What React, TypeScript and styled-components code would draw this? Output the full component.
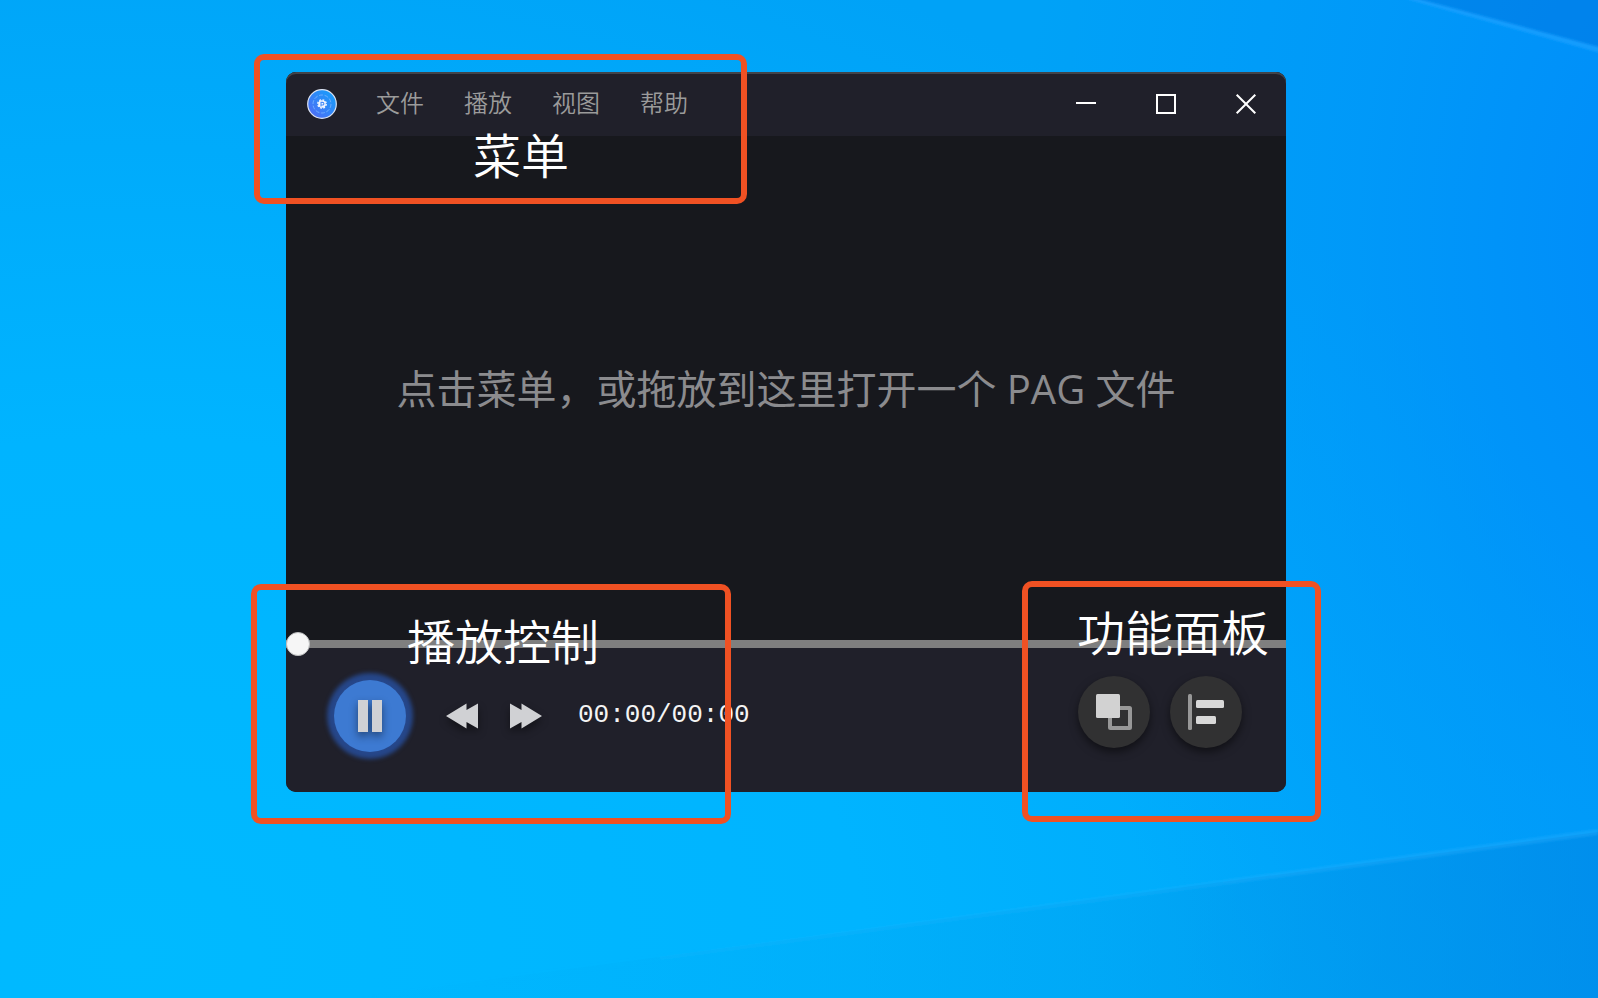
import React, { useState } from "react";
import styled, { createGlobalStyle } from "styled-components";

const GlobalStyle = createGlobalStyle`
  *, *::before, *::after { box-sizing: border-box; }
  body { margin: 0; font-family: "Open Sans", "Noto Sans CJK SC", sans-serif; }
  button { border: 0; padding: 0; margin: 0; background: none; font: inherit; cursor: pointer; }
`;

const Desktop = styled.div`
  position: relative;
  display: flex;
  align-items: flex-start;
  min-height: 100vh;
  padding: 72px 312px 72px 286px;
  overflow: hidden;
  background:
    radial-gradient(ellipse 42% 110% at 106% 24%, rgba(0, 136, 250, 0.9), rgba(0, 144, 250, 0.5) 50%, rgba(0, 156, 248, 0) 100%),
    radial-gradient(ellipse 115% 130% at 8% 96%, #00baff 0%, #00b4ff 40%, #00a2f7 85%);
`;

const Wallpaper = styled.svg`
  position: absolute;
  inset: 0;
  width: 100%;
  height: 100%;
`;

const PlayerWindow = styled.main`
  position: relative;
  flex: 1;
  display: flex;
  flex-direction: column;
  min-width: 880px;
  border-radius: 10px;
  background: #17181d;
`;

const TitleBar = styled.header`
  display: flex;
  align-items: center;
  height: 64px;
  padding-left: 20px;
  border-radius: 10px 10px 0 0;
  background: #20202a;
  box-shadow: inset 0 2px 0 #42444a;
`;

const Logo = styled.svg`
  width: 32px;
  height: 32px;
`;

const Menu = styled.nav`
  display: flex;
  gap: 40px;
  margin-left: 38px;
`;

const MenuButton = styled.button`
  padding-bottom: 2px;
  color: #9b9b9b;
  font-size: 24px;
  font-weight: 350;
  line-height: 36px;
`;

const WindowActions = styled.div`
  display: flex;
  margin-left: auto;
`;

const WindowButton = styled.button`
  display: grid;
  place-items: center;
  width: 80px;
  height: 64px;
`;

const Stage = styled.section`
  display: grid;
  place-items: center;
  height: 504px;
  padding-top: 2px;
`;

const Hint = styled.p`
  margin: 0;
  color: #8b8b8e;
  font-size: 40px;
  font-weight: 400;
  line-height: 60px;
  white-space: nowrap;
`;

const Seek = styled.input`
  appearance: none;
  position: relative;
  display: block;
  width: 100%;
  height: 8px;
  margin: 0;
  background: #7f7f7f;

  &::-webkit-slider-runnable-track { height: 8px; }
  &::-webkit-slider-thumb {
    appearance: none;
    width: 24px;
    height: 24px;
    margin-top: -8px;
    border: 1px solid #bdbebf;
    border-radius: 50%;
    background: #f6f6f6;
  }
`;

const ControlBar = styled.footer`
  display: flex;
  align-items: flex-start;
  height: 144px;
  padding: 28px 44px 0 48px;
  border-radius: 0 0 10px 10px;
  background: #20202a;
`;

const Transport = styled.div`
  display: flex;
  align-items: center;
  gap: 28px;
  padding-top: 4px;
`;

const RoundButton = styled.button<{ $primary?: boolean }>`
  display: grid;
  place-items: center;
  width: 72px;
  height: 72px;
  border-radius: 50%;
  background: ${(p) => (p.$primary ? "#3d7ad2" : "#313132")};
  box-shadow: ${(p) => (p.$primary ? "0 0 4px 7px #26478a" : "0 4px 8px rgba(0, 0, 0, 0.5)")};
`;

const SkipButton = styled.button`
  display: grid;
  place-items: center;
  width: 36px;
  height: 40px;
`;

const SkipGroup = styled.div`
  display: flex;
  gap: 28px;
  margin-left: 10px;
`;

const Glyph = styled.svg<{ $shadow?: boolean }>`
  display: block;
  overflow: visible;
  filter: ${(p) => (p.$shadow ? "drop-shadow(0 4px 4px rgba(0, 0, 0, 0.45))" : "none")};
`;

const Time = styled.output`
  margin-left: 6px;
  padding-bottom: 2px;
  color: #f4f4f4;
  font-family: "Liberation Mono", monospace;
  font-size: 26px;
  line-height: 32px;
`;

const Panels = styled.div`
  display: flex;
  gap: 20px;
  margin-left: auto;
`;

const Callout = styled.aside`
  position: absolute;
  border: 6px solid #f05123;
  border-radius: 10px;
  color: #fff;
  font-size: 48px;
  font-weight: 350;
  line-height: 72px;
  white-space: nowrap;
  pointer-events: none;
`;

const MenuCallout = styled(Callout)`
  top: -18px;
  left: -32px;
  width: 493px;
  height: 150px;
  padding: 60px 0 0 213px;
`;

const PlaybackCallout = styled(Callout)`
  bottom: -32px;
  left: -35px;
  width: 480px;
  height: 240px;
  padding: 16px 0 0 150px;
`;

const PanelCallout = styled(Callout)`
  right: -35px;
  bottom: -30px;
  width: 299px;
  height: 241px;
  padding: 10px 0 0 49px;
`;

const menus = ["文件", "播放", "视图", "帮助"];

function Beams() {
  return (
    <Wallpaper viewBox="0 0 1598 998" preserveAspectRatio="none" aria-hidden="true">
      <defs>
        <linearGradient id="floor" x1="0" x2="1">
          <stop offset="0" stopColor="#00a0e8" stopOpacity="0" />
          <stop offset="0.6" stopColor="#0094e4" stopOpacity="0.24" />
          <stop offset="1" stopColor="#0088e6" stopOpacity="0.65" />
        </linearGradient>
        <linearGradient id="beam" x1="0" x2="1">
          <stop offset="0" stopColor="#2cbcff" stopOpacity="0" />
          <stop offset="1" stopColor="#2cb0ff" stopOpacity="0.35" />
        </linearGradient>
        <filter id="soften" x="-5%" y="-5%" width="110%" height="110%">
          <feGaussianBlur stdDeviation="1.2" />
        </filter>
      </defs>
      <path d="M350 998 L1598 832 V998 Z" fill="url(#floor)" />
      <path d="M350 998 L1598 829 V835 L380 998 Z" fill="url(#beam)" filter="url(#soften)" />
      <path d="M1418 0 H1598 V48 Z" fill="#0070dc" fillOpacity="0.45" />
      <path d="M1402 -2 H1416 L1600 47 V53 Z" fill="#18a0ff" fillOpacity="0.75" filter="url(#soften)" />
    </Wallpaper>
  );
}

function AppLogo() {
  return (
    <Logo viewBox="0 0 32 32" aria-label="PAG" role="img">
      <defs>
        <linearGradient id="disc" x1="0" y1="1" x2="1" y2="0">
          <stop offset="0" stopColor="#5567f4" />
          <stop offset="1" stopColor="#0fa4fb" />
        </linearGradient>
      </defs>
      <circle cx="16" cy="16" r="14.3" fill="url(#disc)" stroke="#dce4f4" strokeWidth="1.2" />
      <circle cx="16" cy="16" r="9" fill="none" stroke="#7db8ff" strokeWidth="0.8" strokeDasharray="4 1.6" />
      <circle cx="16" cy="16" r="3.8" fill="#f4f8ff" />
      <circle cx="16" cy="16" r="4.2" fill="none" stroke="#f4f8ff" strokeWidth="1.4" strokeDasharray="1.8 1.5" />
      <path d="M15 18.4 V14.4 H16.6 A1.3 1.3 0 0 1 16.6 17 H15" fill="none" stroke="#468cf8" strokeWidth="1.1" />
    </Logo>
  );
}

export default function App() {
  const [position, setPosition] = useState(0);
  return (
    <Desktop>
      <GlobalStyle />
      <Beams />
      <PlayerWindow>
        <TitleBar>
          <AppLogo />
          <Menu aria-label="菜单">
            {menus.map((name) => (
              <MenuButton key={name} type="button">{name}</MenuButton>
            ))}
          </Menu>
          <WindowActions>
            <WindowButton type="button" aria-label="最小化">
              <Glyph width="20" height="20" viewBox="0 0 20 20"><path d="M0 8h20v2H0z" fill="#fff" /></Glyph>
            </WindowButton>
            <WindowButton type="button" aria-label="最大化">
              <Glyph width="20" height="20" viewBox="0 0 20 20"><rect x="1" y="1" width="18" height="18" fill="none" stroke="#fff" strokeWidth="2" /></Glyph>
            </WindowButton>
            <WindowButton type="button" aria-label="关闭">
              <Glyph width="20" height="20" viewBox="0 0 20 20"><path d="M0.7 0.7 19.3 19.3M19.3 0.7 0.7 19.3" stroke="#fff" strokeWidth="2" /></Glyph>
            </WindowButton>
          </WindowActions>
        </TitleBar>
        <Stage>
          <Hint>点击菜单，或拖放到这里打开一个 PAG 文件</Hint>
        </Stage>
        <Seek
          type="range"
          min={0}
          max={100}
          value={position}
          onChange={(e) => setPosition(Number(e.target.value))}
          aria-label="播放进度"
        />
        <ControlBar>
          <Transport>
            <RoundButton $primary type="button" aria-label="暂停">
              <Glyph $shadow width="24" height="32" viewBox="0 0 24 32"><path d="M0 0h10v32H0zM14 0h10v32H14z" fill="#d0d1d4" /></Glyph>
            </RoundButton>
            <SkipGroup>
              <SkipButton type="button" aria-label="后退">
                <Glyph $shadow width="32" height="26" viewBox="0 0 32 26"><path d="M0 13 20.5 0.5V7L32 0.5V25.5L20.5 19V25.5Z" fill="#d0d1d4" /></Glyph>
              </SkipButton>
              <SkipButton type="button" aria-label="前进">
                <Glyph $shadow width="32" height="26" viewBox="0 0 32 26"><path d="M32 13 11.5 0.5V7L0 0.5V25.5L11.5 19V25.5Z" fill="#d0d1d4" /></Glyph>
              </SkipButton>
            </SkipGroup>
            <Time>00:00/00:00</Time>
          </Transport>
          <Panels>
            <RoundButton type="button" aria-label="图层">
              <Glyph width="36" height="36" viewBox="0 0 36 36">
                <rect x="14" y="14" width="20" height="20" rx="0.5" fill="none" stroke="#989898" strokeWidth="4" />
                <rect width="24" height="24" rx="1.5" fill="#d2d2d2" />
              </Glyph>
            </RoundButton>
            <RoundButton type="button" aria-label="性能">
              <Glyph width="36" height="36" viewBox="0 0 36 36">
                <rect width="4" height="36" rx="1.5" fill="#989898" />
                <rect x="8" y="6" width="28" height="8" rx="1.5" fill="#d8d8d8" />
                <rect x="8" y="22" width="20" height="8" rx="1.5" fill="#d8d8d8" />
              </Glyph>
            </RoundButton>
          </Panels>
        </ControlBar>
        <MenuCallout>菜单</MenuCallout>
        <PlaybackCallout>播放控制</PlaybackCallout>
        <PanelCallout>功能面板</PanelCallout>
      </PlayerWindow>
    </Desktop>
  );
}
